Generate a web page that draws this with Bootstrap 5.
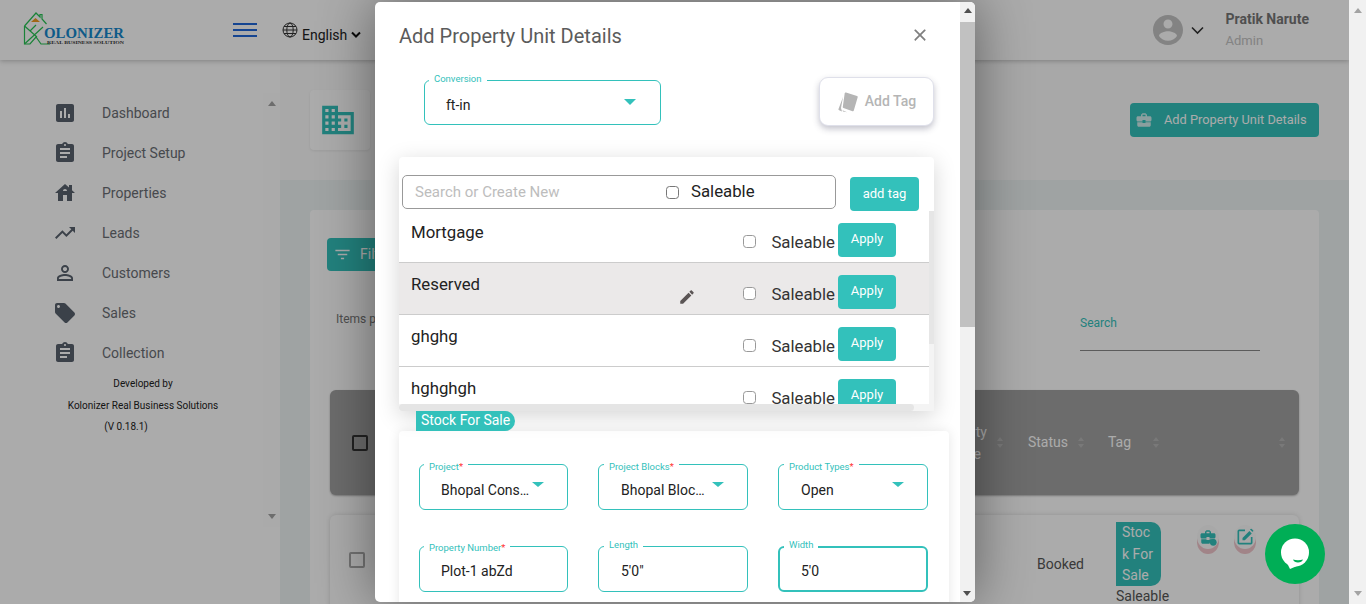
<!DOCTYPE html>
<html lang="en">
<head>
<meta charset="utf-8">
<title>Add Property Unit Details</title>
<link href="https://cdn.jsdelivr.net/npm/bootstrap@5.3.0/dist/css/bootstrap.min.css" rel="stylesheet">
<style>
html,body{height:604px;overflow:hidden;margin:0}
body{font-family:Roboto,"Liberation Sans",sans-serif;font-size:14px;color:#333;background:#fff}
svg{display:block;flex:none}
.pg-shell{width:1366px;height:604px}
.app-area{width:1349px;height:604px;position:relative;overflow:hidden;background:#edf3f3}
.pg-scroll{width:17px;background:#f1f1f1}
.tri-up,.tri-down{width:0;height:0;border-left:4px solid transparent;border-right:4px solid transparent}
.tri-up{border-bottom:5px solid #a3a3a3}.tri-down{border-top:5px solid #a3a3a3}
.top-head{height:60px;background:#fff;box-shadow:0 1px 5px rgba(0,0,0,.25);position:relative;z-index:2}
.logo-box{width:102px;margin:-5px 0 0 23px}
.burger{width:24px;margin-left:108px;gap:4px}
.burger i{display:block;height:2px;background:#2068d8}
.globe-ico{margin:-1px 0 0 25px}
.lang-txt{color:#222;margin:10px 0 0 4px}
.lang-chev{margin:10px 0 0 4px}
.user-name{font-weight:700;color:#777;line-height:18px}
.user-role{font-size:13px;color:#c3c3c3;line-height:18px;margin-top:4px}
.user-txt{margin:0 40px 0 22px}
.side-col{width:280px;height:544px;background:#fff;padding-top:33px}
.side-scroll{height:434px;background:#fff}
.side-nav{width:263px}
.side-track{width:17px;background:#fefefe}
.side-link{height:40px;padding-left:53px;color:#6a6e74;font-size:14px}
.side-link span{margin-left:25px}
.dev-note{font-size:10px;color:#222;text-align:center;line-height:21.5px;width:286px}
.ver-line{margin-right:34px}
.main-col{width:1069px;height:544px}
.title-strip{height:120px;background:#fbfbfb;padding:30px 30px 0}
.title-tile{width:60px;height:60px;padding-right:4px;background:#fff;border-radius:4px;box-shadow:0 1px 3px rgba(0,0,0,.08)}
.add-unit{height:34px;width:189px;margin-top:13px;background:#33c1bb;color:#fff;font-size:12.800px;font-weight:400;border-radius:4px;padding:0 0 0 5px;border:0}
.add-unit span{margin-left:11px}
.list-sheet{margin:30px 30px 0;background:#fff;border-radius:4px;height:500px;display:flow-root}
.filter-btn{width:120px;height:33px;margin:28px 0 0 17px;background:#33c1bb;color:#fff;border:0;border-radius:4px;padding:0 0 0 6px;font-size:14px}
.filter-btn span{margin-left:8px}
.tool-row{margin-top:36px;height:44px;padding:0 59px 0 10px}
.items-lbl{font-size:12px;color:#777;line-height:16px}
.srch-lbl{width:180px;height:44px;padding-top:8px;border-bottom:1px solid #888;font-size:12px;color:#33c1bb;line-height:16px}
.thead-bar{margin:39px 20px 0;height:105px;background:#a1a1a1;border-radius:6px;color:#fff;padding-left:22px;box-shadow:0 1px 2px rgba(0,0,0,.3)}
.chk-fake{width:16px;height:16px;border:2px solid #333;border-radius:2px}
.chk-soft{width:16px;height:16px;border:2px solid #aaa;border-radius:2px;margin-top:30px}
.th-prop{width:56px;text-align:right;margin-left:auto;line-height:22px}
.th-prop span{display:block;padding-right:6px}
.sort-pair{gap:3px;width:8px}
.sort-pair .tri-up,.sort-pair .tri-down{border-left-width:3.5px;border-right-width:3.5px}
.sort-pair .tri-up{border-bottom:4px solid #b5b5b5}.sort-pair .tri-down{border-top:4px solid #b5b5b5}
.sp-a{margin-left:10px}.st-b{margin-left:23px}.sp-c{margin-left:10px}.st-d{margin-left:22px}.sp-e{margin-left:22px}.sp-f{margin:0 12px 0 118px}
.row-sheet{margin:20px 20px 0;height:200px;background:#fff;border-radius:6px;padding:7px 43px 0 19px;box-shadow:0 0 5px rgba(0,0,0,.15)}
.booked-cell{margin-left:auto;margin-top:33px;font-size:14px;color:#555;line-height:18px}
.tag-cell{width:54px;margin-left:32px;font-size:14px;color:#555}
.stock-pill{width:45px;height:64px;background:#33c1bb;color:#fff;border-radius:0 10px 10px 0;padding:0 4px 0 6px;word-break:break-all;line-height:21.500px}
.tag-sub{line-height:20px}
.act-dot{width:22px;height:24px;border-radius:50%;background:#fbfbfb;box-shadow:0 5px 0 #f0c5cb;margin-top:3px}
.act-one{margin-left:27px}.act-two{margin-left:15px}
.dim-layer{position:absolute;inset:0;background:rgba(0,0,0,.33);z-index:10}
.unit-modal{position:absolute;left:375px;top:2px;width:600px;height:600px;z-index:20;border:0;border-radius:5px;background:#fff;box-shadow:0 0 55px rgba(0,0,0,.45);overflow:hidden;flex-direction:row}
.unit-pane{width:585px;padding-left:24px;padding-right:26px}
.unit-bar{width:15px;background:#f1f1f1;padding-top:6px}
.unit-bar .tri-up{border-bottom-color:#505050;margin:0 auto}
.unit-thumb{height:305px;background:#c1c1c1;margin-top:9px}
.unit-bar .tri-down{border-top-color:#505050;position:absolute;top:589px;left:588px}
.modal-ttl{font-size:20px;font-weight:400;color:#5b5b5b;line-height:24px}
.ttl-row{padding:22px 0 0;height:75px}
.ttl-row .btn-close{width:14px;height:14px;padding:0;background-size:14px;margin:4px 7px 0 0;opacity:.5}
.conv-row{height:80px}
.out-field{position:relative;border:1px solid #33c1bb;border-radius:6px;height:45px;background:#fff;padding:0 21px;color:#222;font-size:14px;line-height:47px}
.conv-field{width:237px;margin:3px 0 0 25px;line-height:48px}
.out-lbl{position:absolute;left:4px;top:-8px;padding:0 5px;background:#fff;font-size:9.500px;line-height:12px;color:#33c1bb;white-space:nowrap}
.out-lbl b{font-weight:400;color:#f33}
.drop-caret{position:absolute;top:18px;right:24px;width:0;height:0;border-left:6px solid transparent;border-right:6px solid transparent;border-top:6px solid #33c1bb}
.addtag-btn{width:115px;height:49px;background:#fff;border:1px solid #dfe0ea;border-radius:9px;box-shadow:0 3px 6px rgba(60,60,90,.3);color:#b5b5b5;font-weight:500;font-size:14px;gap:4px}
.tag-panel{width:535px;height:254px;background:#fff;border-radius:4px 4px 0 0;box-shadow:0 5px 22px rgba(0,0,0,.17);position:relative;z-index:1}
.panel-top{height:54px;padding:18px 0 0 3px}
.panel-search{width:434px;height:34px;border:1px solid #999;border-radius:5px;padding-left:12px}
.panel-search .ph-txt{width:251px;color:#bdbdbd;font-size:15px}
.panel-search .sale-word{font-size:16.800px;color:#222;margin-left:12px}
.tiny-chk{width:13px;height:13px;margin:0;border:1px solid #777;border-radius:2px;flex:none}
.add-tag-go{width:69px;height:34px;margin:2px 0 0 14px;background:#33c1bb;color:#fff;border:0;border-radius:4px;font-size:13px;padding:0}
.panel-list{height:193px;overflow:hidden}
.panel-rows{width:530px}
.tag-line{height:52px;flex:none;padding:0 33px 0 12px!important;border-color:#ccc;color:#222}
.tag-line.is-hot{background:#ebe9e9}
.tag-name{font-size:16.800px;line-height:24px;padding-top:9px}
.tag-edit{margin:25px 47px 0 auto}
.tag-line .tiny-chk{margin-top:24px;border-color:#999}
.tag-side{margin-left:auto}
.tag-edit + .tag-side{margin-left:0}
.tag-line .sale-word{font-size:16.800px;margin:20px 3px 0 15px;line-height:22px;color:#333}
.apply-go{width:58px;height:34px;margin-top:12px;background:#33c1bb;color:#fff;border:0;border-radius:4px;font-size:13px;padding:0 0 3px}
.vbar{width:5px;background:#f4f4f4}
.vbar i{display:block;height:133px;background:#e6e6e6}
.hbar{height:7px;background:#f4f4f4}
.hbar i{display:block;width:515px;height:7px;background:#e5e5e5;border-radius:4px}
.stock-head{width:99px;height:20px;margin-left:17px;background:#33c1bb;color:#fff;border-radius:0 10px 10px 0;padding-left:5px;font-size:14px;line-height:19px;position:relative;z-index:2}
.stock-sheet{width:550px;background:#fff;border-radius:4px;box-shadow:0 0 12px rgba(0,0,0,.1);padding:33px 21px 30px 20px}
.field-grid{display:grid;grid-template-columns:149px 150px 150px;column-gap:30px;row-gap:36px}
.field-grid .out-field{height:46px;line-height:50px;padding-right:36px}
.field-grid .out-field.low-val{line-height:48px}
.field-grid .shift-r{padding-left:22px}
.field-grid .shift-r .out-lbl{left:5px}
.field-grid .out-lbl.has-star{top:-4px}
.field-grid .out-lbl.has-star.second{top:-5px}
.field-grid .drop-caret{right:23px;top:17px;border-width:5px 6px}
.field-grid .val-t{display:block;width:90px;white-space:nowrap;overflow:hidden;text-overflow:ellipsis}
.field-grid .thick{border-width:2px;padding-left:21px;line-height:46px}
.field-grid .thick .out-lbl{top:-9px}
.chat-fab{position:absolute;left:1265px;top:524px;width:60px;height:60px;border-radius:50%;background:#00ae56;z-index:30}
</style>
</head>
<body>
<div class="pg-shell d-flex">
  <div class="app-area">
    <header class="top-head d-flex align-items-center">
      <div class="logo-box">
        <svg width="102" height="34" viewBox="0 0 102 34">
          <path d="M1.500 15 13 2l4 4V3.500h2V8l4.500 5M1.500 15v18H7l6-7 5 7h9" fill="none" stroke="#28c254" stroke-width="1.200"/>
          <path d="M1.500 15 14 26M1.500 33 20 16M7 20l6-6" fill="none" stroke="#28c254" stroke-width="1.200"/>
          <path d="M8 11l4.500-4L17 11z" fill="#f09a22"/>
          <text x="21" y="27" font-family="Liberation Serif" font-weight="700" font-size="15" fill="#1688cc" textLength="80" lengthAdjust="spacingAndGlyphs">OLONIZER</text>
          <text x="24" y="32.500" font-family="Liberation Serif" font-weight="700" font-size="4.600" fill="#333" textLength="77" lengthAdjust="spacingAndGlyphs">REAL BUSINESS SOLUTION</text>
        </svg>
      </div>
      <div class="burger d-flex flex-column"><i></i><i></i><i></i></div>
      <svg class="globe-ico" width="16" height="16" viewBox="0 0 16 16" fill="none" stroke="#333" stroke-width="1"><circle cx="8" cy="8" r="7"/><ellipse cx="8" cy="8" rx="3.200" ry="7"/><path d="M1 8h14M2 4.500h12M2 11.500h12"/></svg>
      <span class="lang-txt">English</span>
      <svg class="lang-chev" width="10" height="8" viewBox="0 0 10 8" fill="none" stroke="#111" stroke-width="2"><path d="M1 1.500 5 5.500 9 1.500"/></svg>
      <div class="ms-auto d-flex align-items-center">
        <svg width="30" height="30" viewBox="2 2 20 20" fill="#c3c3c3"><path d="M12 2C6.480 2 2 6.480 2 12s4.480 10 10 10 10-4.480 10-10S17.520 2 12 2zm0 3c1.660 0 3 1.340 3 3s-1.340 3-3 3-3-1.340-3-3 1.340-3 3-3zm0 14.200c-2.500 0-4.710-1.280-6-3.220.030-1.990 4-3.080 6-3.080 1.990 0 5.970 1.090 6 3.080-1.290 1.940-3.500 3.220-6 3.220z"/></svg>
        <svg class="ms-2" width="13" height="9" viewBox="0 0 13 9" fill="none" stroke="#333" stroke-width="1.600"><path d="M1 1.500 6.500 7 12 1.500"/></svg>
        <div class="user-txt"><div class="user-name">Pratik Narute</div><div class="user-role">Admin</div></div>
      </div>
    </header>
    <div class="d-flex">
      <aside class="side-col">
        <div class="side-scroll d-flex">
          <nav class="side-nav">
            <a class="side-link d-flex align-items-center text-decoration-none"><svg width="24" height="24" viewBox="0 0 24 24" fill="#59626e"><path d="M19 3H5c-1.100 0-2 .9-2 2v14c0 1.100.9 2 2 2h14c1.100 0 2-.9 2-2V5c0-1.100-.9-2-2-2zM9 17H7v-7h2v7zm4 0h-2V7h2v10zm4 0h-2v-4h2v4z"/></svg><span>Dashboard</span></a>
            <a class="side-link d-flex align-items-center text-decoration-none"><svg width="24" height="24" viewBox="0 0 24 24" fill="#59626e"><path d="M19 3h-4.180C14.400 1.840 13.300 1 12 1c-1.300 0-2.400.84-2.820 2H5c-1.100 0-2 .9-2 2v14c0 1.100.9 2 2 2h14c1.100 0 2-.9 2-2V5c0-1.100-.9-2-2-2zm-7 0c.55 0 1 .45 1 1s-.45 1-1 1-1-.45-1-1 .45-1 1-1zm2 14H7v-2h7v2zm3-4H7v-2h10v2zm0-4H7V7h10v2z"/></svg><span>Project Setup</span></a>
            <a class="side-link d-flex align-items-center text-decoration-none"><svg width="24" height="24" viewBox="0 0 24 24" fill="#59626e"><path d="M19 9.300V4h-3v2.600L12 3 2 12h3v8h5v-6h4v6h5v-8h3l-3-2.700zM10 10c0-1.100.9-2 2-2s2 .9 2 2h-4z"/></svg><span>Properties</span></a>
            <a class="side-link d-flex align-items-center text-decoration-none"><svg width="24" height="24" viewBox="0 0 24 24" fill="#59626e"><path d="M16 6l2.290 2.290-4.880 4.880-4-4L2 16.590 3.410 18l6-6 4 4 6.300-6.290L22 12V6z"/></svg><span>Leads</span></a>
            <a class="side-link d-flex align-items-center text-decoration-none"><svg width="24" height="24" viewBox="0 0 24 24" fill="#59626e"><path d="M12 5.900c1.160 0 2.100.94 2.100 2.100s-.94 2.100-2.100 2.100S9.900 9.160 9.900 8s.94-2.100 2.100-2.100m0 9c2.970 0 6.100 1.460 6.100 2.100v1.100H5.900V17c0-.64 3.130-2.100 6.100-2.100M12 4C9.790 4 8 5.790 8 8s1.790 4 4 4 4-1.790 4-4-1.790-4-4-4zm0 9c-2.670 0-8 1.340-8 4v3h16v-3c0-2.660-5.330-4-8-4z"/></svg><span>Customers</span></a>
            <a class="side-link d-flex align-items-center text-decoration-none"><svg width="24" height="24" viewBox="0 0 24 24" fill="#59626e"><path d="M21.410 11.580l-9-9C12.050 2.220 11.550 2 11 2H4c-1.100 0-2 .9-2 2v7c0 .55.22 1.050.59 1.420l9 9c.36.36.86.58 1.410.58.55 0 1.050-.22 1.410-.59l7-7c.37-.36.59-.86.59-1.410 0-.55-.23-1.060-.59-1.420zM5.500 7C4.670 7 4 6.330 4 5.500S4.670 4 5.500 4 7 4.670 7 5.500 6.330 7 5.500 7z"/></svg><span>Sales</span></a>
            <a class="side-link d-flex align-items-center text-decoration-none"><svg width="24" height="24" viewBox="0 0 24 24" fill="#59626e"><path d="M19 3h-4.180C14.400 1.840 13.300 1 12 1c-1.300 0-2.400.84-2.820 2H5c-1.100 0-2 .9-2 2v14c0 1.100.9 2 2 2h14c1.100 0 2-.9 2-2V5c0-1.100-.9-2-2-2zm-7 0c.55 0 1 .45 1 1s-.45 1-1 1-1-.45-1-1 .45-1 1-1zm2 14H7v-2h7v2zm3-4H7v-2h10v2zm0-4H7V7h10v2z"/></svg><span>Collection</span></a>
            <div class="dev-note">Developed by<br>Kolonizer Real Business Solutions<br><span class="ver-line">(V 0.18.1)</span></div>
          </nav>
          <div class="side-track d-flex flex-column justify-content-between align-items-center py-2"><div class="tri-up"></div><div class="tri-down"></div></div>
        </div>
      </aside>
      <main class="main-col">
        <div class="title-strip d-flex justify-content-between align-items-start">
          <div class="title-tile d-flex align-items-center justify-content-center"><svg width="38" height="38" viewBox="0 0 24 24" fill="#33c1bb"><path d="M12 7V3H2v18h20V7H12zM6 19H4v-2h2v2zm0-4H4v-2h2v2zm0-4H4V9h2v2zm0-4H4V5h2v2zm4 12H8v-2h2v2zm0-4H8v-2h2v2zm0-4H8V9h2v2zm0-4H8V5h2v2zm10 12h-8v-2h2v-2h-2v-2h2v-2h-2V9h8v10zm-2-8h-2v2h2v-2zm0 4h-2v2h2v-2z"/></svg></div>
          <button class="add-unit btn d-flex align-items-center" type="button"><svg width="18" height="18" viewBox="0 0 24 24" fill="#cfeeed"><path d="M10 16v-1H3.010L3 19c0 1.110.89 2 2 2h14c1.110 0 2-.89 2-2v-4h-7v1h-4zm10-9h-4.010V5l-2-2h-4l-2 2v2H4c-1.100 0-2 .9-2 2v3c0 1.110.89 2 2 2h6v-2h4v2h6c1.100 0 2-.9 2-2V9c0-1.100-.9-2-2-2zm-6 0h-4V5h4v2z"/></svg><span>Add Property Unit Details</span></button>
        </div>
        <section class="list-sheet">
          <button class="filter-btn btn d-flex align-items-center" type="button"><svg width="19" height="19" viewBox="0 0 24 24" fill="#fff"><path d="M10 18h4v-2h-4v2zM3 6v2h18V6H3zm3 7h12v-2H6v2z"/></svg><span>Filters</span></button>
          <div class="tool-row d-flex justify-content-between">
            <div class="items-lbl pt-1 ps-3">Items per page</div>
            <div class="srch-lbl">Search</div>
          </div>
          <div class="thead-bar d-flex align-items-center">
            <div class="chk-fake"></div>
            <div class="th-prop">Property<span>Type</span></div>
            <div class="sort-pair sp-a d-flex flex-column"><div class="tri-up"></div><div class="tri-down"></div></div>
            <div class="st-b">Status</div>
            <div class="sort-pair sp-c d-flex flex-column"><div class="tri-up"></div><div class="tri-down"></div></div>
            <div class="st-d">Tag</div>
            <div class="sort-pair sp-e d-flex flex-column"><div class="tri-up"></div><div class="tri-down"></div></div>
            <div class="sort-pair sp-f d-flex flex-column"><div class="tri-up"></div><div class="tri-down"></div></div>
          </div>
          <div class="row-sheet d-flex align-items-start">
            <div class="chk-soft"></div>
            <div class="booked-cell">Booked</div>
            <div class="tag-cell"><div class="stock-pill">Stock For Sale</div><div class="tag-sub">Saleable</div></div>
            <div class="act-dot act-one d-flex align-items-center justify-content-center"><svg width="18" height="18" viewBox="0 0 24 24" fill="#33c1bb"><path d="M10 16v-1H3.010L3 19c0 1.110.89 2 2 2h9a6 6 0 0 1 7-5v-1h-7v1h-4zm10-9h-4.010V5l-2-2h-4l-2 2v2H4c-1.100 0-2 .9-2 2v3c0 1.110.89 2 2 2h6v-2h4v2h6c1.100 0 2-.9 2-2V9c0-1.100-.9-2-2-2zm-6 0h-4V5h4v2z"/><circle cx="19" cy="19" r="4.500"/></svg></div>
            <div class="act-dot act-two d-flex align-items-center justify-content-center"><svg width="20" height="20" viewBox="0 0 24 24" fill="#33c1bb"><path d="M19 19H5V5h7V3H5a2 2 0 0 0-2 2v14a2 2 0 0 0 2 2h14a2 2 0 0 0 2-2v-7h-2v7zM9 13.200V16h2.800l8.300-8.300-2.800-2.800L9 13.200zm12.700-7.900a1 1 0 0 0 0-1.400l-1.600-1.600a1 1 0 0 0-1.400 0l-.7.7 2.800 2.800.9-.5z"/></svg></div>
          </div>
        </section>
      </main>
    </div>
    <div class="dim-layer"></div>
    <div class="unit-modal modal-content">
      <div class="unit-pane">
        <div class="ttl-row d-flex justify-content-between align-items-start">
          <h5 class="modal-ttl m-0">Add Property Unit Details</h5>
          <button type="button" class="btn-close" aria-label="Close"></button>
        </div>
        <div class="conv-row d-flex justify-content-between align-items-start">
          <div class="out-field conv-field"><span class="out-lbl">Conversion</span>ft-in<span class="drop-caret"></span></div>
          <button type="button" class="addtag-btn btn d-flex align-items-center justify-content-center p-0">
            <svg width="24" height="24" viewBox="0 0 24 24" fill="#b5b5b5"><path d="M9 2.500 20 6a1 1 0 0 1 .7 1.300L16.800 20.500a1 1 0 0 1-1.300.7L6.500 18a1 1 0 0 1-.7-1.300L7.700 3.200a1 1 0 0 1 1.300-.7z"/><path d="M6 7 1.500 19a1 1 0 0 0 .6 1.300L5 21.500 4 18zM6 21.500l4 .8-4.500-2z"/></svg>
            Add Tag
          </button>
        </div>
        <div class="tag-panel">
          <div class="panel-top d-flex align-items-start">
            <div class="panel-search d-flex align-items-center">
              <span class="ph-txt">Search or Create New</span>
              <input class="form-check-input tiny-chk" type="checkbox" aria-label="Saleable">
              <span class="sale-word">Saleable</span>
            </div>
            <button class="add-tag-go btn" type="button">add tag</button>
          </div>
          <div class="panel-list d-flex">
            <div class="panel-rows list-group list-group-flush">
              <div class="tag-line list-group-item d-flex align-items-start">
                <div class="tag-name">Mortgage</div>
                <input class="form-check-input tiny-chk tag-side" type="checkbox" aria-label="Saleable"><span class="sale-word">Saleable</span><button class="apply-go btn" type="button">Apply</button>
              </div>
              <div class="tag-line is-hot list-group-item d-flex align-items-start">
                <div class="tag-name">Reserved</div>
                <svg class="tag-edit" width="18" height="18" viewBox="0 0 24 24" fill="#5b5555"><path d="M3 17.250V21h3.750L17.810 9.940l-3.750-3.750L3 17.250zM20.710 7.040c.39-.39.39-1.020 0-1.410l-2.340-2.340c-.39-.39-1.020-.39-1.410 0l-1.830 1.830 3.750 3.750 1.830-1.830z"/></svg>
                <input class="form-check-input tiny-chk tag-side" type="checkbox" aria-label="Saleable"><span class="sale-word">Saleable</span><button class="apply-go btn" type="button">Apply</button>
              </div>
              <div class="tag-line list-group-item d-flex align-items-start">
                <div class="tag-name">ghghg</div>
                <input class="form-check-input tiny-chk tag-side" type="checkbox" aria-label="Saleable"><span class="sale-word">Saleable</span><button class="apply-go btn" type="button">Apply</button>
              </div>
              <div class="tag-line list-group-item d-flex align-items-start">
                <div class="tag-name">hghghgh</div>
                <input class="form-check-input tiny-chk tag-side" type="checkbox" aria-label="Saleable"><span class="sale-word">Saleable</span><button class="apply-go btn" type="button">Apply</button>
              </div>
            </div>
            <div class="vbar"><i></i></div>
          </div>
          <div class="hbar"><i></i></div>
        </div>
        <div class="stock-head">Stock For Sale</div>
        <div class="stock-sheet">
          <div class="field-grid">
            <div class="out-field"><span class="out-lbl has-star">Project<b>*</b></span><span class="val-t">Bhopal Construction</span><span class="drop-caret"></span></div>
            <div class="out-field shift-r"><span class="out-lbl has-star">Project Blocks<b>*</b></span><span class="val-t">Bhopal Block One</span><span class="drop-caret"></span></div>
            <div class="out-field shift-r"><span class="out-lbl has-star">Product Types<b>*</b></span><span class="val-t">Open</span><span class="drop-caret"></span></div>
            <div class="out-field low-val"><span class="out-lbl has-star second">Property Number<b>*</b></span><span class="val-t">Plot-1 abZd</span></div>
            <div class="out-field low-val shift-r"><span class="out-lbl">Length</span><span class="val-t">5'0"</span></div>
            <div class="out-field thick"><span class="out-lbl">Width</span><span class="val-t">5'0</span></div>
          </div>
        </div>
      </div>
      <div class="unit-bar"><div class="tri-up"></div><div class="unit-thumb"></div><div class="tri-down"></div></div>
    </div>
    <div class="chat-fab d-flex align-items-center justify-content-center">
      <svg width="34" height="34" viewBox="0 0 34 34"><circle cx="17" cy="15.500" r="14" fill="#fff"/><path d="M8 24l4 8 7-3z" fill="#fff"/><path d="M15 22.500c3 1 7 1 10 0-1 4-9 4-10 0z" fill="#00ae56"/></svg>
    </div>
  </div>
  <div class="pg-scroll d-flex flex-column justify-content-between align-items-center py-2"><div class="tri-up"></div><div class="tri-down"></div></div>
</div>
</body>
</html>
